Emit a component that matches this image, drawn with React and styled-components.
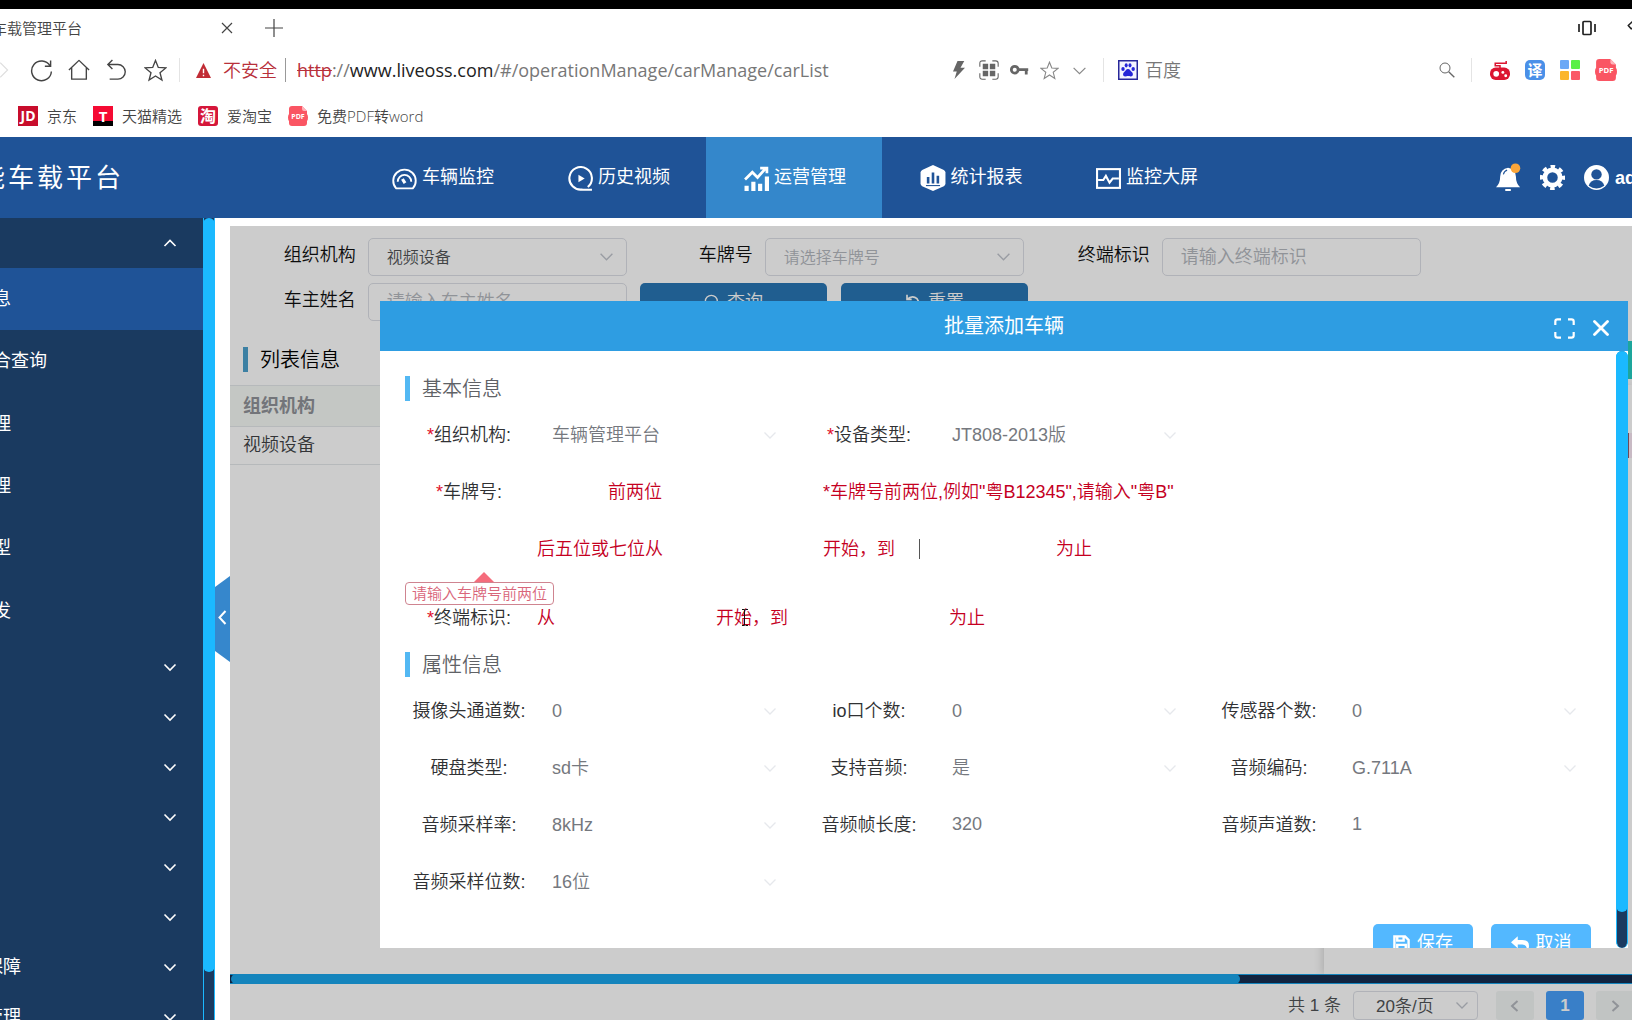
import React from "react";
import styled, { createGlobalStyle, css } from "styled-components";

const Global = createGlobalStyle`
  * { box-sizing: border-box; }
  html, body, #root { height: 100%; }
  body {
    margin: 0;
    overflow: hidden;
    background: #fff;
    color: #303133;
    font: 350 18px/24px "Liberation Sans", "Noto Sans CJK SC", sans-serif;
  }
  button, input, select { font: inherit; margin: 0; padding: 0; border: 0; background: none; outline: none; }
  a { color: inherit; text-decoration: none; }
`;

const Page = styled.div`
  height: 100vh;
  display: flex;
  flex-direction: column;
  overflow: hidden;
`;

/* ---------- browser frame ---------- */
const Chrome = styled.div`
  border-top: 9px solid #000;
  color: #444;
  font-family: "Open Sans", "Noto Sans CJK SC", sans-serif;
`;
const TabStrip = styled.div`
  height: 38px;
  display: flex;
  align-items: center;
  margin-left: -8px;
  margin-right: -30px;
`;
const TabTitle = styled.span`
  width: 223px;
  font-size: 15px;
`;
const IconButton = styled.button`
  display: flex;
  align-items: center;
  justify-content: center;
  width: ${(p) => p.$w || 24}px;
  height: 24px;
  color: ${(p) => p.$color || "#444"};
`;
const Spacer = styled.div`
  flex: 1;
`;
const AddressRow = styled.div`
  height: 46px;
  display: flex;
  align-items: center;
`;
const NavGroup = styled.div`
  display: flex;
  align-items: center;
  gap: 14px;
  margin-left: -9px;
  width: 188px;
`;
const Divider = styled.i`
  width: 1px;
  height: 24px;
  background: ${(p) => p.$color || "#e4e4e4"};
`;
const Security = styled.span`
  display: flex;
  align-items: center;
  gap: 12px;
  margin-left: 16px;
  padding-right: 8px;
  color: #b8303a;
`;
const Url = styled.span`
  margin-left: 11px;
  font-weight: 400;
  color: #777;
  s { color: #b8303a; }
  b { font-weight: 400; color: #222; }
`;
const Tools = styled.div`
  display: flex;
  align-items: center;
  gap: 6px;
  margin-right: 12px;
`;
const SearchBox = styled.div`
  width: 367px;
  display: flex;
  align-items: center;
  justify-content: space-between;
  padding: 0 15px 0 14px;
  color: #777;
`;
const Engine = styled.span`
  display: flex;
  align-items: center;
  gap: 7px;
`;
const Extensions = styled.div`
  display: flex;
  align-items: center;
  gap: 15px;
  padding: 0 15px 0 18px;
`;
const Bookmarks = styled.nav`
  height: 44px;
  display: flex;
  align-items: center;
  gap: 16px;
  padding: 2px 0 0 18px;
  font-size: 15px;
  a { display: flex; align-items: center; gap: 9px; }
`;
const Badge = styled.span`
  display: flex;
  align-items: center;
  justify-content: center;
  width: 20px;
  height: 20px;
  border-radius: ${(p) => p.$r || 0}px;
  background: ${(p) => p.$bg};
  color: #fff;
  font-family: "Open Sans", "Noto Sans CJK SC", sans-serif;
  font-size: ${(p) => p.$size || 14}px;
  font-weight: 700;
  line-height: 20px;
`;

/* ---------- app header ---------- */
const Header = styled.header`
  flex: 0 0 81px;
  display: flex;
  background: #1f5397;
  color: #fff;
  font-weight: 400;
`;
const Brand = styled.div`
  flex: 0 0 375px;
  margin-left: -21px;
  display: flex;
  align-items: center;
  font-size: 26px;
  letter-spacing: 3px;
`;
const MainNav = styled.nav`
  display: flex;
`;
const NavItem = styled.a`
  width: 176px;
  display: flex;
  align-items: center;
  justify-content: center;
  gap: 5px;
  padding: 0 0 2px 2px;
  background: ${(p) => (p.$active ? "#3487cb" : "transparent")};
  svg { margin-top: 3px; }
`;
const UserTools = styled.div`
  margin: 0 -4px 0 auto;
  display: flex;
  align-items: center;
  gap: 19px;
`;
const Account = styled.button`
  display: flex;
  align-items: center;
  gap: 6px;
  color: #fff;
  font-weight: 700;
`;

/* ---------- body ---------- */
const Body = styled.div`
  flex: 1;
  min-height: 0;
  display: flex;
`;
const Sidebar = styled.aside`
  flex: 0 0 203px;
  overflow: hidden;
  background: #1a3a60;
  color: #fff;
  font-weight: 400;
`;
const GroupHead = styled.button`
  display: flex;
  align-items: center;
  justify-content: space-between;
  width: 218px;
  height: 50px;
  margin-left: -15px;
  padding-right: 26px;
  color: #fff;
  font-weight: 400;
`;
const SubMenu = styled.div`
  height: 374px;
  display: flex;
  flex-direction: column;
`;
const SubItem = styled.a`
  flex: 1;
  display: flex;
  align-items: center;
  margin-left: -7px;
  background: ${(p) => (p.$active ? "#1f5397" : "transparent")};
`;
const VTrack = styled.div`
  flex: 0 0 12px;
  background: #1a3a60;
  border: solid #1bb9ff;
  border-width: 0 1px;
  border-radius: ${(p) => (p.$round ? "6px" : 0)};
`;
const VThumb = styled.div`
  height: ${(p) => p.$h};
  margin: 0 -1px;
  border-radius: 6px;
  background: #1bb9ff;
`;
const Gutter = styled.div`
  flex: 0 0 15px;
  display: flex;
  align-items: center;
`;
const Collapse = styled.button`
  width: 15px;
  height: 86px;
  background: #3687cc;
  color: #fff;
  clip-path: polygon(0 11px, 100% 0, 100% 100%, 0 75px);
`;
const Main = styled.main`
  position: relative;
  flex: 1;
  min-width: 0;
  margin-top: 8px;
  display: flex;
  flex-direction: column;
`;
const Filters = styled.form`
  display: flex;
  flex-direction: column;
  gap: 7px;
  padding-top: 12px;
`;
const FilterRow = styled.div`
  display: flex;
`;
const FilterField = styled.div`
  display: flex;
  width: 397px;
  label { width: 126px; margin-top: 5px; text-align: right; color: #111; }
`;
const Control = styled.div`
  position: relative;
  width: 260px;
  height: 38px;
  margin-left: 12px;
  color: #c0c4cc;
  > svg { position: absolute; right: 13px; top: 11px; pointer-events: none; }
`;
const boxed = css`
  width: 100%;
  height: 100%;
  padding: 0 18px;
  border: 1px solid #dcdfe6;
  border-radius: 5px;
  background: transparent;
`;
const FilterSelect = styled.select`
  ${boxed}
  appearance: none;
  padding-top: 2px;
  font-size: 16px;
  color: ${(p) => (p.$empty ? "#b4b8be" : "#505356")};
`;
const FilterInput = styled.input`
  ${boxed}
  color: #505356;
  &::placeholder { color: #b4b8be; opacity: 1; }
`;
const FilterButton = styled.button`
  display: flex;
  justify-content: center;
  align-items: center;
  gap: 7px;
  width: 187px;
  height: 38px;
  margin-right: 14px;
  border-radius: 5px;
  background: #2976b4;
  color: #fff;
`;
const FilterActions = styled.div`
  display: flex;
  margin-left: 13px;
`;
const ListHead = styled.div`
  display: flex;
  align-items: center;
  justify-content: space-between;
  height: 51px;
  margin-top: 13px;
  padding-left: 13px;
`;
const Heading = styled.h2`
  display: flex;
  align-items: center;
  height: 25px;
  margin: ${(p) => p.$m || 0};
  padding-left: 12px;
  border-left: 5px solid ${(p) => p.$bar || "#53b8f3"};
  color: ${(p) => p.$color || "#606266"};
  font-size: 20px;
  font-weight: 350;
`;
const AddButton = styled.button`
  width: 90px;
  height: 38px;
  background: #25d0c4;
`;
const TableArea = styled.div`
  flex: 1;
  display: flex;
  min-height: 0;
`;
const Scroller = styled.div`
  flex: 1;
`;
const Table = styled.table`
  width: 100%;
  border-collapse: collapse;
  text-align: left;
  th, td { padding: 0 0 0 13px; border-bottom: 1px solid #e4e8ea; }
  th { height: 41px; border-top: 1px solid #e4e8ea; background: #f6f9f5; color: #909399; font-weight: 700; }
  td { height: 38px; padding-bottom: 2px; color: #404245; }
`;
const FixedPane = styled.div`
  display: flex;
  justify-content: flex-end;
  width: 308px;
  padding-top: 48px;
  box-shadow: -2px 0 8px rgba(0, 0, 0, 0.15);
`;
const RowAction = styled.button`
  width: 40px;
  height: 25px;
  margin-right: -36px;
  border-left: 1px solid #8c5a6c;
  background: #fbe9f6;
`;
const HTrack = styled.div`
  height: 10px;
  border: solid #19a5eb;
  border-width: 1px 0;
  background: #162c4f;
`;
const HThumb = styled.div`
  width: 72%;
  height: 10px;
  margin: -1px 0 0 1px;
  border-radius: 5px;
  background: #19a5eb;
`;
const Pager = styled.div`
  height: 36px;
  display: flex;
  align-items: center;
  justify-content: flex-end;
  margin-right: -2px;
  padding-top: 7px;
  gap: 12px;
  color: #505356;
  font-size: 17px;
`;
const PageSize = styled.div`
  position: relative;
  width: 125px;
  height: 29px;
  margin-right: 6px;
  color: #c0c4cc;
  select {
    appearance: none;
    width: 100%;
    height: 100%;
    padding: 2px 0 0 22px;
    border: 1px solid #dcdfe6;
    border-radius: 4px;
    color: #505356;
  }
  svg { position: absolute; right: 9px; top: 7px; pointer-events: none; }
`;
const PageButton = styled.button`
  display: flex;
  align-items: center;
  justify-content: center;
  width: 38px;
  height: 29px;
  border-radius: 3px;
  background: ${(p) => (p.$on ? "#489ffa" : "#f2f5f4")};
  color: ${(p) => (p.$on ? "#fff" : "#b4b8be")};
  font-weight: 700;
`;

/* ---------- dialog ---------- */
const Overlay = styled.div`
  position: absolute;
  inset: 0;
  display: flex;
  padding: 75px 4px 72px 150px;
  background: rgba(0, 0, 0, 0.2);
`;
const Dialog = styled.section`
  flex: 1;
  min-width: 0;
  display: flex;
  flex-direction: column;
  background: #fff;
`;
const DialogHead = styled.header`
  position: relative;
  flex: 0 0 50px;
  display: flex;
  align-items: center;
  justify-content: center;
  background: #2e9de2;
  color: #fff;
  font-size: 20px;
  font-weight: 400;
`;
const HeadActions = styled.div`
  position: absolute;
  right: 16px;
  top: 15px;
  display: flex;
  gap: 15px;
`;
const DialogBody = styled.div`
  flex: 1;
  min-height: 0;
  display: flex;
  overflow: hidden;
`;
const Form = styled.form`
  flex: 1;
  padding: 25px 11px 0 25px;
`;
const FormGrid = styled.div`
  display: grid;
  grid-template-columns: repeat(3, 1fr);
`;
const Line = styled.div`
  position: relative;
  display: flex;
  align-items: center;
  height: 57px;
  margin-top: ${(p) => p.$mt || 0}px;
  color: #c5001f;
`;
const FieldLabel = styled.label`
  width: 128px;
  margin-right: 4px;
  text-align: center;
  color: #303133;
  i { font-style: normal; color: #e0102c; }
`;
const Select = styled.div`
  position: relative;
  width: 250px;
  color: #e6e8ec;
  select {
    appearance: none;
    width: 100%;
    height: 38px;
    padding-left: 15px;
    color: #75787e;
    opacity: 1;
  }
  svg { position: absolute; right: 10px; top: 12px; pointer-events: none; }
`;
const PlainInput = styled.input`
  width: 250px;
  height: 38px;
  padding-left: 15px;
  color: #75787e;
`;
const Affix = styled.span`
  width: ${(p) => (p.$wide ? "125px" : "auto")};
  text-align: right;
  white-space: nowrap;
`;
const Slot = styled.span`
  position: relative;
  width: 161px;
  input { width: 100%; height: 38px; padding: 0 15px; }
`;
const Caret = styled.i`
  position: absolute;
  left: 24px;
  top: 9px;
  width: 1px;
  height: 20px;
  background: #555;
`;
const TipAnchor = styled.div`
  position: relative;
  z-index: 1;
`;
const Tip = styled.div`
  position: absolute;
  left: 0;
  top: 5px;
  height: 23px;
  padding: 0 6px;
  border: 1px solid #cf8490;
  border-radius: 4px;
  color: #d9667a;
  font-size: 15px;
  line-height: 21px;
  &::before {
    content: "";
    position: absolute;
    left: 68px;
    top: -11px;
    border: solid transparent;
    border-width: 0 10px 10px;
    border-bottom-color: #f56c7c;
  }
`;
const Pointer = styled.svg`
  position: absolute;
  left: 336px;
  top: 20px;
`;
const FormActions = styled.div`
  display: flex;
  justify-content: flex-end;
  gap: 18px;
  margin-top: 14px;
  padding-right: 14px;
`;
const ActionButton = styled.button`
  display: flex;
  align-items: center;
  justify-content: center;
  gap: 7px;
  width: 100px;
  height: 38px;
  border-radius: 5px;
  background: #53b8ff;
  color: #fff;
  font-weight: 400;
`;

/* ---------- drawings ---------- */
const Svg = ({ s = 24, w, sw = 1.5, box, children, ...rest }) => (
  <svg width={w || s} height={s} viewBox={box || "0 0 24 24"} fill="none" stroke="currentColor" strokeWidth={sw} aria-hidden="true" {...rest}>
    {children}
  </svg>
);
const Down = ({ s = 14, sw = 1.3, up }) => (
  <Svg s={s} sw={sw} box="0 0 14 14"><path d={up ? "M1.5 10 7 4.5 12.5 10" : "M1.5 4.5 7 10l5.5-5.5"} /></Svg>
);
const Star = ({ s }) => (
  <Svg s={s} sw={1.4}><path d="m12 1.5 2.9 7.3 7.9.5-6.1 5 2 7.7L12 17.7 5.300 22l2-7.700-6.100-5 7.900-.5z" /></Svg>
);
const Paw = () => (
  <svg width="20" height="20" viewBox="0 0 20 20" aria-hidden="true">
    <rect x=".75" y=".75" width="18.5" height="18.5" fill="#f4f4ff" stroke="#28289a" strokeWidth="1.5" />
    <g fill="#2626d8">
      <ellipse cx="5" cy="9" rx="1.7" ry="2.100" /><ellipse cx="8.200" cy="5.300" rx="1.500" ry="2.100" />
      <ellipse cx="12" cy="5.300" rx="1.500" ry="2.100" /><ellipse cx="15.200" cy="9" rx="1.700" ry="2.100" />
      <path d="M10 9c2 0 2.500 2 4 3.300s1.200 4.200-1.200 4.200c-1.300 0-1.800-.4-2.800-.4s-1.500.4-2.800.4C4.800 16.500 4.500 13.600 6 12.300S8 9 10 9z" />
    </g>
  </svg>
);
const PdfIcon = ({ s }) => (
  <svg width={s} height={s} viewBox="0 0 20 20" aria-hidden="true">
    <path d="M4 0h10l5 5v3q1 1 1 3.500T19 15v2q0 3-3 3H4q-3 0-3-3v-2q-1-1-1-3.500T1 8V3q0-3 3-3z" fill="#fa5563" />
    <path d="M14 0v3q0 2 2 2h3z" fill="#ffb3b9" />
    <text x="10" y="13" textAnchor="middle" fontFamily="Open Sans" fontSize="7" fontWeight="700" fill="#fff">PDF</text>
  </svg>
);

const navIcons = {
  gauge: <Svg s={25} sw={1.8}><path d="M4 21.500A10.800 10.800 0 1 1 20 21.500z" strokeLinejoin="round" /><path d="M5.500 15a6.500 6.500 0 0 1 13 0" /><path d="m10 12.500 2.500 4" strokeWidth="3" /></Svg>,
  play: <Svg s={25} sw={2}><path d="M14 22.500A10.800 10.800 0 1 1 19 20.200M12 22.800h11" /><path d="M10 8.500v7l6-3.500z" fill="currentColor" stroke="none" /></Svg>,
  growth: <Svg s={25} sw={2.600}><path d="m1 13 7-7 5 5 8-9M15.500 2H22v5" /><path d="M2.500 19v5M9 15v9M15.500 17v7M22 10v14" strokeWidth="4" /></Svg>,
  bars: <Svg s={26} sw={2}><path d="M12 0 22 4.500q1.500 1 1.500 2.500v10q0 1.500-1.500 2.500L12 24 2 19.500Q.5 18.500.5 17V7Q.5 5.500 2 4.500z" fill="#fff" stroke="none" /><path d="M7.500 11v6M12 7v10M16.500 10v7" stroke="#1f5397" strokeWidth="2.400" /><path d="M5.500 19h13" stroke="#1f5397" strokeWidth="1" /></Svg>,
  wave: <Svg s={25} sw={2}><rect x="1" y="3" width="22" height="18" /><path d="M2 13.500h5l2.500-4 3.500 6.500 3-4h6" /></Svg>,
};

const nav = [["车辆监控", "gauge"], ["历史视频", "play"], ["运营管理", "growth"], ["统计报表", "bars"], ["监控大屏", "wave"]];
const subItems = ["息", "合查询", "理", "理", "型", "发"];
const groups = ["", "", "", "", "", "", "保障", "管理"];
const attrs = [
  ["摄像头通道数", "0"], ["io口个数", "0"], ["传感器个数", "0"],
  ["硬盘类型", "sd卡"], ["支持音频", "是"], ["音频编码", "G.711A"],
  ["音频采样率", "8kHz"], ["音频帧长度", "320", true], ["音频声道数", "1", true],
  ["音频采样位数", "16位"],
];

const Field = ({ id, label, value, required, plain }) => (
  <Line>
    <FieldLabel htmlFor={id}>{required && <i>*</i>}{label}:</FieldLabel>
    {plain ? (
      <PlainInput id={id} defaultValue={value} />
    ) : (
      <Select>
        <select id={id} defaultValue={value}><option>{value}</option></select>
        <Down />
      </Select>
    )}
  </Line>
);

function BrowserFrame() {
  return (
    <Chrome>
      <TabStrip>
        <TabTitle>车载管理平台</TabTitle>
        <IconButton aria-label="关闭标签"><Svg s={12} box="0 0 12 12" sw={1.2}><path d="m1 1 10 10M11 1 1 11" /></Svg></IconButton>
        <IconButton $w={70} aria-label="新标签"><Svg s={18} box="0 0 18 18" sw={1.2}><path d="M9 0v18M0 9h18" /></Svg></IconButton>
        <Spacer />
        <IconButton $w={50} $color="#222" aria-label="侧栏"><Svg s={18} box="0 0 18 18" sw={1.7}><rect x="5" y="2.500" width="8" height="13" rx="1" /><path d="M1 5v8M17 5v8" /></Svg></IconButton>
        <IconButton $w={50} $color="#222" aria-label="皮肤"><Svg s={20} sw={1.9}><path d="M8 3 1.500 9 5 13l2-1v9.500h10V12l2 1 3.500-4L16 3q-4 4-8 0z" strokeLinejoin="round" /></Svg></IconButton>
      </TabStrip>
      <AddressRow>
        <NavGroup>
          <IconButton $color="#ddd" aria-label="前进"><Svg s={22} sw={1.2}><path d="m9 4 8 8-8 8" /></Svg></IconButton>
          <IconButton aria-label="刷新"><Svg s={23}><path d="M20.800 7A10.300 10.300 0 1 0 22.300 13M21.500 1.500V7.500H15.500" /></Svg></IconButton>
          <IconButton aria-label="主页"><Svg s={22}><path d="M1 12 12 1.500 23 12M4 9.500V22h16V9.500" strokeLinejoin="round" /></Svg></IconButton>
          <IconButton aria-label="撤销"><Svg s={22}><path d="M7 1 2 6l5 5M2 6h11a7.800 7.800 0 0 1 0 16H4" /></Svg></IconButton>
          <IconButton aria-label="收藏"><Star s={23} /></IconButton>
        </NavGroup>
        <Divider />
        <Security>
          <svg width="15" height="15" viewBox="0 0 16 16" aria-hidden="true"><path d="M8 0 16 16H0z" fill="#c12c35" /><path d="M8 6v5M8 12.500v1.500" stroke="#fff" strokeWidth="1.500" /></svg>
          不安全
        </Security>
        <Divider $color="#999" />
        <Url><s>http</s>://<b>www.liveoss.com</b>/#/operationManage/carManage/carList</Url>
        <Spacer />
        <Tools>
          <IconButton $color="#666" aria-label="极速"><Svg s={18} stroke="none" fill="currentColor"><path d="M10 0h9l-5 9h6L6 24l3-10H4z" /></Svg></IconButton>
          <IconButton $color="#666" aria-label="二维码"><Svg s={20} sw={1.3}><path d="M1 8V4q0-3 3-3h4M16 1h4q3 0 3 3v4M23 16v4q0 3-3 3h-4M8 23H4q-3 0-3-3v-4" /><path d="M4.500 4.500h6.500v6.500H4.500zM13 4.500h6.500v6.500H13zM4.500 13h6.500v6.500H4.500zM13 13h6.500v6.500H13z" fill="currentColor" stroke="none" /></Svg></IconButton>
          <IconButton $color="#666" aria-label="密码"><Svg s={19} sw={3.5}><circle cx="6" cy="11" r="4.300" /><path d="M10 11h13M20.500 11v6" /></Svg></IconButton>
          <IconButton $color="#888" aria-label="添加收藏"><Star s={19} /></IconButton>
          <IconButton $color="#888" aria-label="更多"><Down s={15} sw={1.1} /></IconButton>
        </Tools>
        <Divider />
        <SearchBox>
          <Engine><Paw />百度</Engine>
          <IconButton $w={18} $color="#666" aria-label="搜索"><Svg s={16}><circle cx="9" cy="9" r="7.500" /><path d="m14.500 14.500 8.500 8.500" strokeWidth="2" /></Svg></IconButton>
        </SearchBox>
        <Divider />
        <Extensions>
          <svg width="20" height="20" viewBox="0 0 21 21" aria-hidden="true">
            <rect y="8" width="21" height="13" rx="6" fill="#dc1530" /><path d="M10.500 9V6H5.500V3.500H17V1" fill="none" stroke="#dc1530" strokeWidth="1.600" />
            <circle cx="6.500" cy="14.500" r="3" fill="#fff" /><circle cx="13.500" cy="13" r="1.500" fill="#fff" /><circle cx="16.500" cy="16.500" r="1.500" fill="#fff" />
          </svg>
          <Badge $bg="#4a90e8" $r={5} $size={15}>译</Badge>
          <svg width="20" height="20" viewBox="0 0 20 20" aria-hidden="true"><rect width="9" height="9" rx="1" fill="#6aa8f6" /><rect x="11" width="9" height="9" rx="1" fill="#5bf046" /><rect y="11" width="9" height="9" rx="1" fill="#fbb62c" /><rect x="11" y="11" width="9" height="9" rx="1" fill="#fa5a68" /></svg>
          <PdfIcon s={22} />
        </Extensions>
      </AddressRow>
      <Bookmarks>
        <a href="#jd"><Badge $bg="#c80d2c" $size={14}>JD</Badge>京东</a>
        <a href="#tmall"><Badge $bg="linear-gradient(#f50a33 75%, #000 75%)" $size={15}>T</Badge>天猫精选</a>
        <a href="#taobao"><Badge $bg="#d5163a" $r={3} $size={16}>淘</Badge>爱淘宝</a>
        <a href="#pdf"><PdfIcon s={20} />免费PDF转word</a>
      </Bookmarks>
    </Chrome>
  );
}

export default function App() {
  return (
    <Page>
      <Global />
      <BrowserFrame />
      <Header>
        <Brand>能车载平台</Brand>
        <MainNav>
          {nav.map(([text, icon]) => (
            <NavItem key={text} href={"#" + icon} $active={icon === "growth"}>{navIcons[icon]}{text}</NavItem>
          ))}
        </MainNav>
        <UserTools>
          <IconButton $w={25} $color="#fff" aria-label="通知">
            <svg width="27" height="32" viewBox="0 0 27 32" aria-hidden="true">
              <path d="M13 5q8 1 8.500 9.500 0 7.500 4.500 11.500H0q4.500-4 4.500-11.500Q5 6 13 5zM10 28h6v2h-6z" fill="#fff" /><path d="M8 12q.8-3.500 4-4.500" fill="none" stroke="#1f5397" strokeWidth="1.200" /><circle cx="21" cy="5.500" r="5.200" fill="#fba63a" />
            </svg>
          </IconButton>
          <IconButton $w={25} $color="#fff" aria-label="设置">
            <Svg s={25} sw={4.5}><circle cx="12" cy="12" r="7.300" /><circle cx="12" cy="12" r="10.600" strokeWidth="3" strokeDasharray="4.400 3.925" strokeDashoffset="2.200" /></Svg>
          </IconButton>
          <Account>
            <svg width="25" height="25" viewBox="0 0 24 24" aria-hidden="true"><circle cx="12" cy="12" r="12" fill="#fff" /><circle cx="12" cy="9" r="5" fill="#1f5397" /><path d="M4.500 20q1.500-5.500 7.500-5.500t7.500 5.500q-3.500 2.500-7.500 2.500T4.500 20z" fill="#1f5397" /></svg>
            ad
          </Account>
        </UserTools>
      </Header>
      <Body>
        <Sidebar>
          <GroupHead aria-label="收起"><span /><Down s={14} sw={1.6} up /></GroupHead>
          <SubMenu>
            {subItems.map((t, i) => <SubItem key={i} href={"#sub" + i} $active={i === 0}>{t}</SubItem>)}
          </SubMenu>
          {groups.map((t, i) => <GroupHead key={i} aria-label={t || "展开"}><span>{t}</span><Down s={14} sw={1.6} /></GroupHead>)}
        </Sidebar>
        <VTrack><VThumb $h="94%" /></VTrack>
        <Gutter>
          <Collapse aria-label="折叠菜单"><Svg s={15} sw={2} box="0 0 15 15"><path d="M10.500 1 4.500 7.500l6 6.500" /></Svg></Collapse>
        </Gutter>
        <Main>
          <Filters>
            <FilterRow>
              <FilterField><label htmlFor="org">组织机构</label><Control><FilterSelect id="org"><option>视频设备</option></FilterSelect><Down s={15} /></Control></FilterField>
              <FilterField><label htmlFor="plate">车牌号</label><Control><FilterSelect id="plate" $empty><option>请选择车牌号</option></FilterSelect><Down s={15} /></Control></FilterField>
              <FilterField><label htmlFor="term">终端标识</label><Control><FilterInput id="term" placeholder="请输入终端标识" /></Control></FilterField>
            </FilterRow>
            <FilterRow>
              <FilterField><label htmlFor="owner">车主姓名</label><Control><FilterInput id="owner" placeholder="请输入车主姓名" /></Control></FilterField>
              <FilterActions>
                <FilterButton type="button"><Svg s={16} sw={2}><circle cx="11" cy="11" r="9" /><path d="m18 18 5 5" /></Svg>查询</FilterButton>
                <FilterButton type="button"><Svg s={16} sw={2.5}><path d="M3 1v7h7M3 8q8-7 15-1 6 8-2 15" /></Svg>重置</FilterButton>
              </FilterActions>
            </FilterRow>
          </Filters>
          <ListHead><Heading $bar="#4ba0cc" $color="#000">列表信息</Heading><AddButton aria-label="批量添加" /></ListHead>
          <TableArea>
            <Scroller>
              <Table>
                <thead><tr><th>组织机构</th></tr></thead>
                <tbody><tr><td>视频设备</td></tr></tbody>
              </Table>
            </Scroller>
            <FixedPane><RowAction aria-label="操作" /></FixedPane>
          </TableArea>
          <HTrack><HThumb /></HTrack>
          <Pager>
            <span>共 1 条</span>
            <PageSize><select aria-label="每页条数"><option>20条/页</option></select><Down /></PageSize>
            <PageButton aria-label="上一页"><Svg s={14} sw={2} box="0 0 14 14"><path d="M9.500 2 4 7l5.500 5" /></Svg></PageButton>
            <PageButton $on>1</PageButton>
            <PageButton aria-label="下一页"><Svg s={14} sw={2} box="0 0 14 14"><path d="M4.500 2 10 7l-5.500 5" /></Svg></PageButton>
          </Pager>
          <Overlay>
            <Dialog role="dialog" aria-label="批量添加车辆">
              <DialogHead>
                批量添加车辆
                <HeadActions>
                  <IconButton $w={22} $color="#fff" aria-label="全屏"><Svg s={21} sw={2.5}><path d="M1.500 8V4q0-2.500 2.500-2.500h4M16 1.500h4q2.500 0 2.500 2.500v4M22.500 16v4q0 2.500-2.500 2.500h-4M8 22.500H4q-2.500 0-2.500-2.500v-4" /></Svg></IconButton>
                  <IconButton $w={22} $color="#fff" aria-label="关闭"><Svg s={16} sw={2.8} box="0 0 16 16"><path d="m1.500 1.500 13 13M14.500 1.500l-13 13" strokeLinecap="round" /></Svg></IconButton>
                </HeadActions>
              </DialogHead>
              <DialogBody>
                <Form>
                  <Heading $m="0 0 5px">基本信息</Heading>
                  <FormGrid>
                    <Field id="d-org" label="组织机构" value="车辆管理平台" required />
                    <Field id="d-type" label="设备类型" value="JT808-2013版" required />
                  </FormGrid>
                  <Line>
                    <FieldLabel htmlFor="d-prefix"><i>*</i>车牌号:</FieldLabel>
                    <Affix $wide>前两位</Affix>
                    <Slot><input id="d-prefix" /></Slot>
                    <span>*车牌号前两位,例如"粤B12345",请输入"粤B"</span>
                  </Line>
                  <Line>
                    <FieldLabel as="span" />
                    <Affix $wide>后五位或七位从</Affix>
                    <Slot><input aria-label="车牌号开始" /></Slot>
                    <Affix>开始，到</Affix>
                    <Slot><input aria-label="车牌号结束" /><Caret /></Slot>
                    <Affix>为止</Affix>
                  </Line>
                  <TipAnchor><Tip>请输入车牌号前两位</Tip></TipAnchor>
                  <Line $mt={12}>
                    <FieldLabel htmlFor="d-term"><i>*</i>终端标识:</FieldLabel>
                    <Affix>从</Affix>
                    <Slot><input id="d-term" /></Slot>
                    <Affix>开始，到</Affix>
                    <Slot><input aria-label="终端标识结束" /></Slot>
                    <Affix>为止</Affix>
                    <Pointer width="8" height="17" viewBox="0 0 8 17" fill="none" stroke="#111"><path d="M1 .5h2.500v16H1M7 .5H4.500M7 16.500H4.500" /></Pointer>
                  </Line>
                  <Heading $m="6px 0 5px">属性信息</Heading>
                  <FormGrid>
                    {attrs.map(([label, value, plain], i) => <Field key={label} id={"attr" + i} label={label} value={value} plain={plain} />)}
                  </FormGrid>
                  <FormActions>
                    <ActionButton type="button"><Svg s={17} sw={3.4}><path d="M2 2h15l5 5v15H2zM6 2v6h9V2M6 22v-8h12v8" /></Svg>保存</ActionButton>
                    <ActionButton type="button"><Svg s={18} stroke="none" fill="currentColor"><path d="M9 3v5h6q9 0 9 8 0 4-3 6 1-8-6-8H9v5l-9-8z" /></Svg>取消</ActionButton>
                  </FormActions>
                </Form>
                <VTrack $round><VThumb $h="94%" /></VTrack>
              </DialogBody>
            </Dialog>
          </Overlay>
        </Main>
      </Body>
    </Page>
  );
}
